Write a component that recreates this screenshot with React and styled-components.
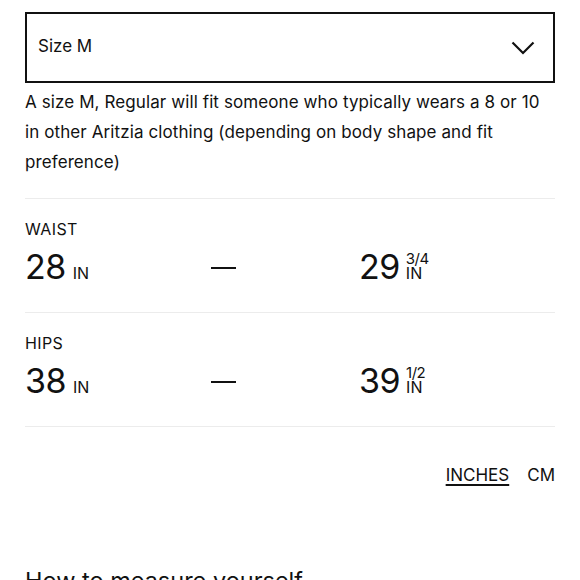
import React from "react";
import styled, { createGlobalStyle } from "styled-components";

const Global = createGlobalStyle`
  html, body { margin: 0; padding: 0; background: #fff; }
  body { font-family: Inter, "Noto Sans", sans-serif; color: #111; }
`;

const Page = styled.div`
  width: 580px;
  height: 580px;
  overflow: hidden;
  padding: 12px 25px 0;
  box-sizing: border-box;
`;

const Select = styled.div`
  height: 71px;
  box-sizing: border-box;
  border: 2px solid #111;
  display: flex;
  align-items: center;
  justify-content: space-between;
  padding: 0 18px 0 11px;
  font-size: 17px;
`;

const SelectText = styled.span`
  padding-bottom: 4px;
`;

const Desc = styled.p`
  margin: 4px 0 0;
  font-size: 17px;
  line-height: 30px;
  letter-spacing: 0.1px;
`;

const Divider = styled.div`
  height: 1px;
  background: #ececec;
  margin-top: ${(p) => p.$top || 0}px;
`;

const Measure = styled.div`
  padding-top: 20px;
  height: 113px;
  box-sizing: border-box;
`;

const Label = styled.div`
  font-size: 16px;
  line-height: 20px;
  letter-spacing: 0.4px;
`;

const Values = styled.div`
  display: grid;
  grid-template-columns: 186px 148px 1fr;
  align-items: baseline;
  margin-top: 8px;
`;

const Cell = styled.div`
  white-space: nowrap;
  line-height: 40px;
`;

const Num = styled.span`
  font-size: 34px;
  letter-spacing: -0.5px;
`;

const Unit = styled.span`
  font-size: 16px;
  margin-left: 7px;
`;

const Dash = styled.span`
  display: inline-block;
  width: 25px;
  height: 2.5px;
  background: #111;
  transform: translateY(-10px);
`;

const Frac = styled.span`
  display: inline-block;
  margin-left: 6px;
  font-size: 16px;
  line-height: 15px;
`;

const FracLine = styled.span`
  display: block;
  font-size: ${(p) => (p.$top ? 15 : 16)}px;
  letter-spacing: ${(p) => (p.$top ? "-0.5px" : "0")};
`;

const UnitRow = styled.div`
  display: flex;
  justify-content: flex-end;
  gap: 18px;
  margin-top: 38px;
  font-size: 17px;
`;

const UnitLink = styled.span`
  text-decoration: ${(p) => (p.$active ? "underline" : "none")};
  text-underline-offset: 3px;
  text-decoration-thickness: 1.5px;
`;

const Heading = styled.h2`
  margin: 81px 0 0;
  font-weight: 400;
  font-size: 23.5px;
`;

const Chevron = () => (
  <svg width="24" height="14" viewBox="0 0 24 14" fill="none">
    <path d="M1.5 1.5 L12 12 L22.5 1.5" stroke="#111" strokeWidth="2.2" />
  </svg>
);

const rows = [
  { label: "WAIST", from: "28", to: "29", frac: "3/4" },
  { label: "HIPS", from: "38", to: "39", frac: "1/2" },
];

export default function App() {
  return (
    <Page>
      <Global />
      <Select>
        <SelectText>Size M</SelectText>
        <Chevron />
      </Select>
      <Desc>
        A size M, Regular will fit someone who typically wears a 8 or 10 in
        other Aritzia clothing (depending on body shape and fit preference)
      </Desc>
      <Divider $top={21} />
      {rows.map((r) => (
        <React.Fragment key={r.label}>
          <Measure>
            <Label>{r.label}</Label>
            <Values>
              <Cell>
                <Num>{r.from}</Num>
                <Unit>IN</Unit>
              </Cell>
              <Cell>
                <Dash />
              </Cell>
              <Cell>
                <Num>{r.to}</Num>
                <Frac>
                  <FracLine $top>{r.frac}</FracLine>
                  <FracLine>IN</FracLine>
                </Frac>
              </Cell>
            </Values>
          </Measure>
          <Divider />
        </React.Fragment>
      ))}
      <UnitRow>
        <UnitLink $active>INCHES</UnitLink>
        <UnitLink>CM</UnitLink>
      </UnitRow>
      <Heading>How to measure yourself</Heading>
    </Page>
  );
}
